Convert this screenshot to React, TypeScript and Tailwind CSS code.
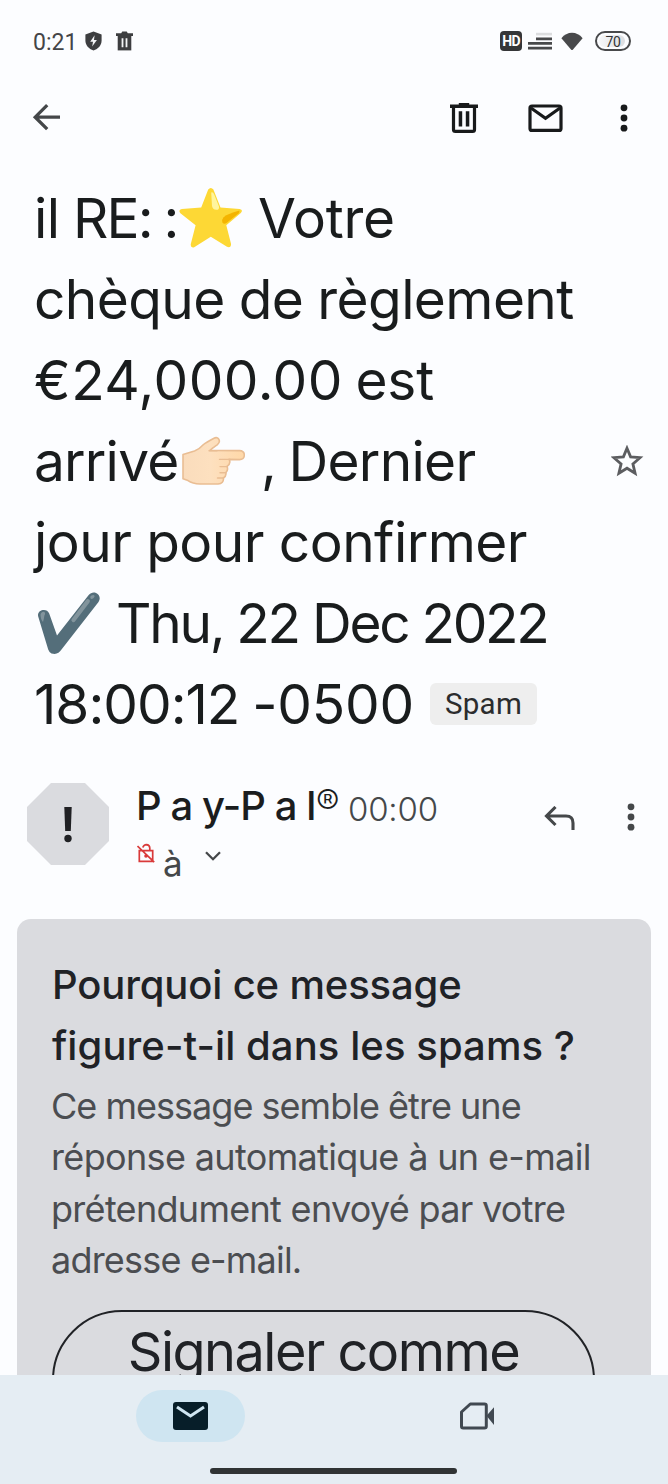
import type { ReactNode } from 'react';

function ShieldIcon() {
  return (
    <svg className="ml-[9px] h-[20px] w-[17px]" viewBox="0 0 17 20">
      <path d="M8.5 .4 16.6 3.4V9.6C16.6 14.3 13.3 17.9 8.5 19.6 3.7 17.9.4 14.3.4 9.6V3.4Z" fill="#3d3e40" />
      <path d="M9.6 4.2 5.2 10.8H8L7.2 15.6 11.9 9H9Z" fill="#f3f4f6" />
    </svg>
  );
}

function SmallTrashIcon() {
  return (
    <svg className="ml-[14px] h-[20px] w-[17px]" viewBox="0 0 17 20">
      <path d="M0 2.3H5.2L6.3.6H10.7L11.8 2.3H17V5H0Z" fill="#3d3e40" />
      <path d="M1.7 4.5H15.3V19.4H1.7Z" fill="#3d3e40" />
      <path d="M5.6 7.3H7.4V16.3H5.6ZM9.6 7.3H11.4V16.3H9.6Z" fill="#f3f4f6" />
    </svg>
  );
}

function Dots({ color }: { color: string }) {
  return (
    <svg className="h-[28px] w-[8px]" viewBox="0 0 8 28" fill={color}>
      <circle cx="4" cy="3.8" r="3.4" />
      <circle cx="4" cy="14" r="3.4" />
      <circle cx="4" cy="24.2" r="3.4" />
    </svg>
  );
}

function StatusBar() {
  return (
    <div className="flex h-[82px] items-center pl-[33px] pr-[37px]">
      <span className="mt-[2px] w-[43px] whitespace-nowrap font-[Roboto,sans-serif] text-[23px] leading-none text-[#444547]">0:21</span>
      <ShieldIcon />
      <SmallTrashIcon />
      <div className="ml-auto flex items-center">
        <span className="flex h-[20px] w-[22px] items-center justify-center rounded-[4px] bg-[#353638] font-[Roboto,sans-serif] text-[14px] leading-none font-bold tracking-[-0.7px] text-white">HD</span>
        <svg className="ml-[6px] h-[18px] w-[24px]" viewBox="0 0 24 18">
          <path d="M8 .8H24V3.4H8Z" fill="#dcdddf" />
          <path d="M8 5.5H24V8.2H8ZM0 10.1H24V12.8H0ZM0 14.8H24V17.5H0Z" fill="#48494b" />
        </svg>
        <svg className="ml-[9px] h-[19px] w-[22px]" viewBox="0 0 22 19">
          <path d="M.4 6.2C5.8-1.2 16.2-1.2 21.6 6.2L12 17.4Q11 18.5 10 17.4Z" fill="#48494b" />
        </svg>
        <div className="ml-[12px] flex h-[20px] w-[36px] items-center rounded-full border-2 border-[#48494b] p-[2px]">
          <div className="flex h-full w-[26px] items-center justify-center rounded-full bg-linear-to-r from-[#f6f7f9] to-[#dcdde0] pt-[1px] pl-[2px] font-[Roboto,sans-serif] text-[14px] leading-none tracking-[-0.3px] text-[#333436]">70</div>
        </div>
      </div>
    </div>
  );
}

function Toolbar() {
  return (
    <div className="flex h-[72px] items-center pl-[32px] pr-[40px]">
      <svg className="h-[28px] w-[28px]" viewBox="0 0 28 28" fill="none" stroke="#444749" strokeWidth="3.3">
        <path d="M28 13.2H3.4M15.2 1.2 3.2 13.2 15.2 25.2" />
      </svg>
      <svg className="ml-[390px] h-[32px] w-[28px]" viewBox="0 0 28 32">
        <path d="M0 2.6H8.8V1H19.2V2.6H28V6H0Z" fill="#181a1b" />
        <path d="M3.5 5V27.5Q3.5 29.4 5.4 29.4H22.6Q24.5 29.4 24.5 27.5V5" fill="none" stroke="#181a1b" strokeWidth="3.2" />
        <path d="M8.7 9.2H12.2V24.6H8.7ZM15.8 9.2H19.3V24.6H15.8Z" fill="#181a1b" />
      </svg>
      <svg className="ml-[50px] h-[28px] w-[35px]" viewBox="0 0 35 28" fill="none" stroke="#181a1b" strokeWidth="3.2">
        <rect x="2" y="2" width="31" height="24.4" rx="2" />
        <path d="M3 4 17.5 14.2 32 4" />
      </svg>
      <div className="ml-auto"><Dots color="#181a1b" /></div>
    </div>
  );
}

function StarEmoji() {
  return (
    <svg className="h-[62px] w-[64px] shrink-0" viewBox="0 0 64 62">
      <path d="M29.2 2.6Q31.8-.8 34.4 2.6L41.5 20.6 60.6 22Q64.6 22.8 61.8 26L47.3 38.2 52 56.8Q52.2 61.2 48 59.8L31.8 49.8 15.2 60.2Q11.2 61.2 11.8 57L16.6 38.2 1.4 26.2Q-1.2 23 2.8 22L22.2 20.6Z" fill="#fdd835" />
      <path d="M32.2 5.5Q34 4.7 35 7L40 19.4Q40.5 23 37.2 22.8 33.6 22.6 33 19Z" fill="#fff59d" />
      <path d="M60.4 23.6Q61 25 59.5 26.6L47.5 36Q45 37.6 43.4 35.4 42.2 33 44.4 30.4 48 27 60.4 23.6Z" fill="#f4b400" />
    </svg>
  );
}

function HandEmoji() {
  return (
    <svg className="h-[50px] w-[64px] shrink-0" viewBox="0 0 64 50">
      <defs>
        <linearGradient id="skin" x1="0" x2="1" y1="0" y2="0">
          <stop offset="0" stopColor="#fadcbc" />
          <stop offset=".45" stopColor="#fde0bf" />
          <stop offset="1" stopColor="#ffd8a8" />
        </linearGradient>
      </defs>
      <path d="M2 18.5 13.5 15Q18 13.5 22.5 8.5 25 6.5 33 2.2C37.5-.2 40.5 5.5 36.2 8.8 32.5 11.5 29.5 13.4 28.8 14.5L58.5 14.6C65 15 64.8 23.3 58.5 23.6L48 23.4Q50.4 27 46 30.4 47.6 34 44.8 36.6 45.6 40 42.4 42 43 47.4 37 48H19Q11.5 47.6 7 44.6L2 42.8Z" fill="url(#skin)" stroke="#e9bd93" strokeWidth="1.6" strokeLinejoin="round" />
      <path d="M28 14.7H36M38.5 23.4H49M39 30.6H46.5M39 36.8H45M36.5 42H42.5" fill="none" stroke="#e9bd93" strokeWidth="1.4" strokeLinecap="round" />
    </svg>
  );
}

function CheckEmoji() {
  return (
    <svg className="h-[64px] w-[64px] shrink-0" viewBox="0 0 64 64">
      <path d="M1.2 25.5C-.5 19 9.8 16.4 12.2 22.5L20 44.5 51.5 4.2C57-2.4 66 4.5 61.5 11L24.5 58.6Q21 64.3 14.5 62.4 12.2 61.6 11.2 58.6Z" fill="#546e7a" />
      <path d="M36.5 29 50.8 10.2" stroke="#82949c" strokeWidth="4.2" strokeLinecap="round" />
      <ellipse cx="55.4" cy="5.9" rx="2.4" ry="1.6" fill="#82949c" transform="rotate(-35 55.4 5.9)" />
      <path d="M3.5 24Q3.5 21 7 20.8 9 22 7.4 24.5 7 28 6 31Q3.8 29 3.5 24Z" fill="#82949c" />
    </svg>
  );
}

function TitleLine({ children }: { children: ReactNode }) {
  return <div className="flex h-[81px] items-center whitespace-pre">{children}</div>;
}

function Subject() {
  return (
    <div className="flex items-center justify-between pl-[34px] pr-[24px] pt-[23px]">
      <h1 className="text-[55px] leading-[81px] text-[#191c1d]">
        <TitleLine>
          <span className="mt-[2px] w-[39px] tracking-[-0.6px]">il</span>
          <span className="mt-[2px] w-[106px] tracking-[-1.8px] [word-spacing:-2px]">RE: :</span>
          <StarEmoji />
          <span className="ml-[15px] mt-[2px] tracking-[-0.2px]">Votre</span>
        </TitleLine>
        <TitleLine>
          <span className="mt-[2px] tracking-[-0.6px] [word-spacing:-0.8px]">chèque de règlement</span>
        </TitleLine>
        <TitleLine>
          <span className="mt-[2px] tracking-[0.5px] [word-spacing:-3.5px]">€24,000.00 <span className="tracking-[-0.2px]">est</span></span>
        </TitleLine>
        <TitleLine>
          <span className="mt-[2px] w-[147px] tracking-[-0.8px]">arrivé</span>
          <HandEmoji />
          <span className="ml-[16px] mt-[2px] tracking-[-0.7px] [word-spacing:-2.5px]">, Dernier</span>
        </TitleLine>
        <TitleLine>
          <span className="mt-[2px] tracking-[-0.55px]">jour pour confirmer</span>
        </TitleLine>
        <TitleLine>
          <span className="ml-[3px] flex"><CheckEmoji /></span>
          <span className="ml-[15px] mt-[2px] tracking-[-2.3px]">Thu, 22 Dec 2022</span>
        </TitleLine>
        <TitleLine>
          <span className="mt-[2px] w-[396px] tracking-[-0.6px]"><span className="tracking-[-1px]">18:00:12</span><span className="[word-spacing:-2.5px] tracking-[-0.2px]"> -0500</span></span>
          <span className="flex h-[42px] w-[107px] items-center justify-center rounded-[6px] bg-[#eeeeee] pt-[2px] font-[Roboto,sans-serif] text-[29.5px] leading-none tracking-[0.3px] text-[#2b2c2d]">Spam</span>
        </TitleLine>
      </h1>
      <svg className="h-[32px] w-[33px] shrink-0" viewBox="0 0 33 32" fill="none" stroke="#5c5d60" strokeWidth="2.8">
        <path d="M16 3.2 19.6 11.9 29 12.7 21.9 18.9 24.1 28.2 16 23.2 7.9 28.2 10.1 18.9 3 12.7 12.4 11.9Z" />
      </svg>
    </div>
  );
}

function Sender() {
  return (
    <div className="flex h-[175px] items-start pl-[27px] pr-[33px] pt-[39px]">
      <div className="flex h-[82px] w-[82px] shrink-0 items-center justify-center bg-[#dadbdf] [clip-path:polygon(29.3%_0,70.7%_0,100%_29.3%,100%_70.7%,70.7%_100%,29.3%_100%,0_70.7%,0_29.3%)]">
        <svg className="mt-[2px] h-[36px] w-[10px]" viewBox="0 0 10 36" fill="#202124">
          <path d="M1.3 0H8.7L7.8 24H2.2Z" />
          <circle cx="5" cy="31.5" r="3.7" />
        </svg>
      </div>
      <div className="ml-[27px] flex-1">
        <div className="flex h-[47px] items-baseline whitespace-pre leading-[46px]">
          <span className="w-[180px] text-[40px] font-medium tracking-[-0.9px] text-[#1b1d1e]">P a y-P a l</span>
          <span className="relative -top-[5px] w-[32px] text-[35px] font-light text-[#1b1d1e]">®</span>
          <span className="relative top-[1px] text-[33px] font-[350] tracking-[-0.2px] text-[#45484a]">00:00</span>
        </div>
        <div className="flex h-[50px] items-start pl-[1px]">
          <svg className="mt-[13px] h-[20px] w-[18px]" viewBox="0 0 18 20" fill="none" stroke="#d93a3a" strokeWidth="1.7">
            <path d="M2.3 7.7H15.7V18.3H2.3ZM5.8 4.6Q6.8 1.6 9.4 1.6 12.7 1.8 12.8 5V7.7M.5 3 17.2 19.2" />
            <circle cx="9" cy="13" r="1.8" fill="#d93a3a" stroke="none" />
          </svg>
          <span className="ml-[8px] mt-[8px] text-[35px] leading-[50px] text-[#45484a]">à</span>
          <svg className="ml-[22px] mt-[21px] h-[10px] w-[16px]" viewBox="0 0 16 10" fill="none" stroke="#45484a" strokeWidth="2.3">
            <path d="M1 1.2 8 8.2 15 1.2" />
          </svg>
        </div>
      </div>
      <svg className="mt-[23px] h-[24px] w-[31px]" viewBox="0 0 31 24" fill="none" stroke="#45484a" strokeWidth="3.1">
        <path d="M11.5 1 2.5 10 11.5 19M3 10H22Q29 10 29 17V24" />
      </svg>
      <div className="ml-[52px] mt-[20px]"><Dots color="#45484a" /></div>
    </div>
  );
}

function SpamNotice() {
  return (
    <section className="mx-[17px] h-[456px] overflow-hidden rounded-t-[14px] bg-[#dadbdf] px-[35px] pt-[35px]">
      <h2 className="whitespace-nowrap text-[40px] leading-[61px] font-medium text-[#202226]">
        <div className="tracking-[-0.15px]">Pourquoi ce message</div>
        <div className="tracking-[0.08px]">figure-t-il dans les spams ?</div>
      </h2>
      <div className="-ml-[1px] mt-[5px] whitespace-nowrap text-[36px] leading-[51.3px] font-normal text-[#4b4d51]">
        <div className="tracking-[-0.98px]">Ce message semble être une</div>
        <div className="tracking-[-0.65px]">réponse automatique à un e-mail</div>
        <div className="tracking-[-0.7px]">prétendument envoyé par votre</div>
        <div className="tracking-[-0.8px]">adresse e-mail.</div>
      </div>
      <button className="mt-[24px] block h-[140px] w-[543px] rounded-[70px] border-2 border-[#202226] text-[54px] text-[#202226]">
        <span className="block h-[138px] pt-[5px] leading-[70px] tracking-[-1.5px] whitespace-nowrap">Signaler comme</span>
      </button>
    </section>
  );
}

function BottomBar() {
  return (
    <nav className="h-[109px] bg-[#e5edf3] pt-[15px]">
      <div className="flex items-center">
        <div className="ml-[136px] flex h-[52px] w-[109px] items-center justify-center rounded-full bg-[#cfe5f1]">
          <svg className="h-[28px] w-[35px]" viewBox="0 0 35 28">
            <rect width="35" height="28" rx="3" fill="#071e29" />
            <path d="M4 5 17.5 14 31 5" fill="none" stroke="#cfe5f1" strokeWidth="3.1" />
          </svg>
        </div>
        <svg className="ml-[213px] h-[28px] w-[36px]" viewBox="0 0 36 28">
          <path d="M12.3 2H26.5Q28.3 2 28.3 3.8V24.2Q28.3 26 26.5 26H5.3Q3.5 26 3.5 24.2V10Z" fill="none" stroke="#414951" strokeWidth="3" strokeLinejoin="round" />
          <path d="M28.5 13.8 36 5.2V23Z" fill="#414951" />
        </svg>
      </div>
      <div className="ml-[210px] mt-[26px] h-[6px] w-[247px] rounded-full bg-[#303334]" />
    </nav>
  );
}

export default function App() {
  return (
    <div className="h-[1484px] w-[668px] overflow-hidden bg-[#fcfdff] font-[Inter,sans-serif]">
      <StatusBar />
      <Toolbar />
      <Subject />
      <Sender />
      <SpamNotice />
      <BottomBar />
    </div>
  );
}
